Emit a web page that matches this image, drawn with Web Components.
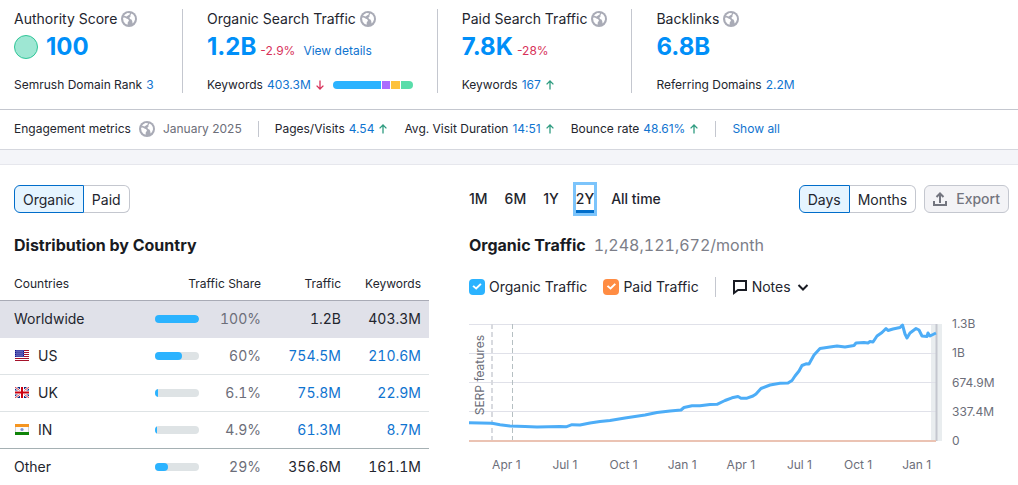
<!DOCTYPE html>
<html lang="en">
<head>
<meta charset="utf-8">
<meta name="viewport" content="width=device-width, initial-scale=1">
<title>Domain Overview</title>
<style>
  body { margin: 0; background: #fff; color: #23252e; font: 14px/20px Inter, "Liberation Sans", sans-serif; }
</style>
</head>
<body>
<domain-overview></domain-overview>
<script>
const shared = `
  *, *::before, *::after { box-sizing: border-box; }
  a { color: #0f74d0; text-decoration: none; }
  button { font: inherit; color: inherit; margin: 0; padding: 0; border: 0; background: none; cursor: pointer; }
`;
class Base extends HTMLElement {
  constructor() { super(); this.attachShadow({ mode: 'open' }); }
  connectedCallback() { this.shadowRoot.innerHTML = `<style>${shared}</style>${this.render()}`; }
}

customElements.define('globe-icon', class extends Base {
  render() {
    return `<style>:host { display: inline-flex; flex: none; width: 16px; height: 16px; color: #a9abb6; } svg { width: 100%; height: 100%; }</style>
    <svg viewBox="0 0 16 16" aria-hidden="true"><circle cx="8" cy="8" r="8" fill="currentColor"/>
    <path fill="#fff" d="M2.2 5.8 3.2 4.8 5.6 5.4 7 4.4 8.6 3.6 9 2.2 6.4 2 4 3.4z"/>
    <path fill="#fff" d="M2 6.8 3.8 6.4 5.4 7.4 7.2 8.2 8 9.8 6.8 11.2 6.6 13.8 4.4 12.8 2.6 10.6z"/>
    <path fill="#fff" d="M10.4 2.6 12.4 3.8 13.8 6 14 8.6 13 11 11.6 12.4 11.2 10 10.4 8.6 9 8 8.4 6.6 9.6 5.6 9.4 4.2z"/></svg>`;
  }
});

customElements.define('trend-arrow', class extends Base {
  render() {
    const down = this.getAttribute('dir') === 'down';
    return `<style>:host { display: inline-flex; flex: none; width: 10px; height: 10px; color: ${down ? '#d8325a' : '#2f9c80'}; } svg { width: 100%; height: 100%; }</style>
    <svg viewBox="0 0 10 10" fill="none" stroke="currentColor" stroke-width="1.3" aria-hidden="true"><path d="${down ? 'M5 .5v8.3M1.6 5.6 5 9 8.4 5.6' : 'M5 9.5V1.2M1.6 4.4 5 1 8.4 4.4'}"/></svg>`;
  }
});

customElements.define('metric-card', class extends Base {
  render() {
    return `<style>
      :host { display: flex; flex-direction: column; flex: none; height: 84px; padding-right: 24px; border-right: 1px solid #c4c7cf; }
      :host([last]) { border-right: 0; }
      .title, .foot { display: flex; align-items: center; gap: 4px; white-space: nowrap; }
      .value { display: flex; align-items: baseline; gap: 4px; height: 32px; margin: 2px 0 14px; line-height: 32px; white-space: nowrap; }
      .foot { height: 16px; font-size: 12px; line-height: 16px; }
      strong { font-size: 24px; font-weight: 700; color: #008ff8; }
      ::slotted(.delta) { font-size: 12px; color: #d8325a; }
      ::slotted(.more) { font-size: 12px; margin-left: 4px; }
      ::slotted(.dot) { flex: none; align-self: center; width: 24px; height: 24px; margin-right: 4px; border: 1px solid #30c698; border-radius: 50%; background: #9ee7d3; }
    </style>
    <div class="title"><span>${this.getAttribute('label')}</span><globe-icon></globe-icon></div>
    <div class="value"><slot name="lead"></slot><strong>${this.getAttribute('value')}</strong><slot name="extra"></slot></div>
    <div class="foot"><slot></slot></div>`;
  }
});

customElements.define('position-bar', class extends Base {
  render() {
    return `<style>
      :host { display: flex; gap: 1px; width: 80px; height: 8px; margin-left: 4px; border-radius: 4px; overflow: hidden; }
      i { flex: 8 0 0; background: #ab6cfe; } i:nth-of-type(1) { flex-grow: 48; background: #2bb3ff; }
      i:nth-of-type(3) { flex-grow: 9; background: #fdc23c; } i:nth-of-type(4) { flex-grow: 12; background: #59ddaa; }
    </style><i></i><i></i><i></i><i></i>`;
  }
});

customElements.define('summary-strip', class extends Base {
  render() {
    return `<style>
      :host { display: flex; gap: 24px; padding: 9px 14px 16px; border-bottom: 1px solid #c4c7cf; overflow: hidden; }
      .first { width: 169px; }
    </style>
    <metric-card class="first" label="Authority Score" value="100"><span class="dot" slot="lead"></span>Semrush Domain Rank <a href="#rank">3</a></metric-card>
    <metric-card label="Organic Search Traffic" value="1.2B"><span slot="extra" class="delta">-2.9%</span><a slot="extra" class="more" href="#details">View details</a>Keywords <a href="#organic">403.3M</a><trend-arrow dir="down"></trend-arrow><position-bar></position-bar></metric-card>
    <metric-card label="Paid Search Traffic" value="7.8K"><span slot="extra" class="delta">-28%</span>Keywords <a href="#paid">167</a><trend-arrow></trend-arrow></metric-card>
    <metric-card last label="Backlinks" value="6.8B">Referring Domains <a href="#domains">2.2M</a></metric-card>`;
  }
});

customElements.define('engagement-bar', class extends Base {
  render() {
    return `<style>
      :host { display: flex; box-sizing: border-box; align-items: center; gap: 16px; height: 40px; padding: 0 14px 1px; font-size: 12px; line-height: 16px; white-space: nowrap; border-bottom: 1px solid #d5d7de; overflow: hidden; }
      span { display: flex; align-items: center; gap: 4px; }
      .date { gap: 8px; color: #6c6e79; }
      .name { gap: 8px; }
      .rule { width: 1px; height: 16px; background: #c4c7cf; }
    </style>
    <span class="name">Engagement metrics <span class="date"><globe-icon></globe-icon>January 2025</span></span>
    <i class="rule"></i>
    <span>Pages/Visits <a href="#pages">4.54</a><trend-arrow></trend-arrow></span>
    <span>Avg. Visit Duration <a href="#duration">14:51</a><trend-arrow></trend-arrow></span>
    <span>Bounce rate <a href="#bounce">48.61%</a><trend-arrow></trend-arrow></span>
    <i class="rule"></i>
    <a href="#all">Show all</a>`;
  }
});

customElements.define('pill-toggle', class extends Base {
  render() {
    const items = this.getAttribute('options').split(',');
    return `<style>
      :host { display: inline-flex; height: 28px; }
      button { height: 28px; padding: 2px 8px 0; border: 1px solid #c4c7cf; border-left: 0; border-radius: 0 6px 6px 0; }
      button:first-of-type { border: 1px solid #006dca; border-radius: 6px 0 0 6px; background: #e5f4ff; }
    </style>${items.map((t, i) => `<button type="button" aria-pressed="${i === 0}">${t}</button>`).join('')}`;
  }
});

customElements.define('share-bar', class extends Base {
  render() {
    return `<style>
      :host { display: block; width: 44px; height: 8px; border-radius: 4px; background: #dee3e5; overflow: hidden; }
      i { display: block; width: ${this.getAttribute('value')}%; height: 8px; border-radius: 0 4px 4px 0; background: #2bb3ff; }
      :host([small]) i { border-radius: 0; }
    </style><i></i>`;
  }
});

customElements.define('country-flag', class extends Base {
  render() {
    const art = {
      us: `<rect width="14" height="11" fill="#fff"/><path d="M0 .5h14M0 2.5h14M0 4.5h14M0 6.5h14M0 8.5h14M0 10.5h14" stroke="#a5122a"/><rect width="9" height="7" fill="#10108a"/><path d="M.5 1.5h8M.5 3.5h8M.5 5.5h8" stroke="#a9acdf" stroke-dasharray="1 1"/><path d="M1.5 .5h7M1.5 2.5h7M1.5 4.5h7M1.5 6.5h7" stroke="#8085cc" stroke-dasharray="1 1"/>`,
      uk: `<rect width="14" height="11" fill="#0a2a82"/><path d="M0 0 14 11M14 0 0 11" stroke="#fff" stroke-width="2.4"/><path d="M0 0 14 11M14 0 0 11" stroke="#d8202c" stroke-width=".9"/><path d="M7 0v11M0 5.5h14" stroke="#fff" stroke-width="4"/><path d="M7 0v11M0 5.5h14" stroke="#cc0010" stroke-width="2"/>`,
      in: `<rect width="14" height="11" fill="#d0d0d4"/><rect x="1" y="3" width="12" height="5" fill="#fafafc"/><rect width="14" height="3" fill="#f59520"/><rect y="8" width="14" height="3" fill="#0f8408"/><circle cx="7" cy="5.5" r="1.6" fill="#7f92cc"/>`
    };
    return `<style>:host { display: block; width: 14px; height: 12px; } svg { display: block; width: 14px; height: 11px; }</style><svg viewBox="0 0 14 11" aria-hidden="true">${art[this.getAttribute('code')]}</svg>`;
  }
});

customElements.define('country-table', class extends Base {
  render() {
    const rows = [['Worldwide', '', 100, '100%', '1.2B', '403.3M'], ['US', 'us', 61, '60%', '754.5M', '210.6M'], ['UK', 'uk', 7, '6.1%', '75.8M', '22.9M'], ['IN', 'in', 5, '4.9%', '61.3M', '8.7M'], ['Other', '', 29, '29%', '356.6M', '161.1M']];
    return `<style>
      :host { display: block; }
      table { width: 100%; border-collapse: separate; border-spacing: 0; table-layout: fixed; }
      th, td { padding: 0; text-align: right; font-weight: 400; white-space: nowrap; }
      thead th { height: 33px; font-size: 12px; line-height: 16px; border-bottom: 1px solid #a9abb6; }
      tbody th, thead th:first-child { padding-left: 14px; text-align: left; }
      tbody th, tbody td { height: 37px; border-bottom: 1px solid #dee3e5; }
      tbody td { font-variant-numeric: tabular-nums; }
      tr > :last-child { padding-right: 8px; }
      .place { display: flex; align-items: center; gap: 9px; }
      country-flag { margin-left: 1px; }
      .share { display: flex; align-items: center; justify-content: space-between; color: #6c6e79; }
      tbody tr:first-child > * { background: #e0e1e9; border-bottom-color: #e0e1e9; }
      tbody tr:nth-child(4) > * { border-bottom-color: #a5b0b3; }
      tbody tr:last-child > * { border-bottom-color: transparent; }
    </style>
    <table>
      <colgroup><col><col style="width:106px"><col style="width:80px"><col style="width:88px"></colgroup>
      <thead><tr><th scope="col">Countries</th><th scope="col">Traffic Share</th><th scope="col">Traffic</th><th scope="col">Keywords</th></tr></thead>
      <tbody>${rows.map(([n, f, p, s, t, k]) => {
        const v = x => f ? `<a href="#${f}">${x}</a>` : x;
        return `<tr><th scope="row"><span class="place">${f ? `<country-flag code="${f}"></country-flag>` : ''}${n}</span></th><td><span class="share"><share-bar value="${p}"${p < 10 ? ' small' : ''}></share-bar>${s}</span></td><td>${v(t)}</td><td>${v(k)}</td></tr>`;
      }).join('')}</tbody>
    </table>`;
  }
});

customElements.define('country-panel', class extends Base {
  render() {
    return `<style>
      :host { display: block; min-width: 0; }
      pill-toggle { display: flex; margin-left: 14px; }
      h2 { margin: 20px 0 11px 14px; font-size: 16px; line-height: 24px; font-weight: 700; color: #191b23; }
    </style>
    <pill-toggle options="Organic,Paid"></pill-toggle>
    <h2>Distribution by Country</h2>
    <country-table></country-table>`;
  }
});

customElements.define('period-tabs', class extends Base {
  render() {
    return `<style>
      :host { display: flex; gap: 17px; }
      button { height: 28px; font-weight: 500; white-space: nowrap; }
      button[aria-selected="true"] { border-bottom: 3px solid #006dca; padding-top: 3px; outline: 3px solid #7cc4fb; }
    </style>
    <button type="button" role="tab">1M</button><button type="button" role="tab">6M</button><button type="button" role="tab">1Y</button><button type="button" role="tab" aria-selected="true">2Y</button><button type="button" role="tab">All time</button>`;
  }
});

customElements.define('series-check', class extends Base {
  render() {
    return `<style>
      :host { display: block; }
      label { display: flex; align-items: center; gap: 4px; white-space: nowrap; }
      input { appearance: none; flex: none; display: grid; place-items: center; width: 16px; height: 16px; margin: 0; border-radius: 4px; background: var(--tone); }
      input:checked::before { content: ""; width: 10px; height: 8px; background: #fff; clip-path: polygon(4% 50%, 18% 33%, 40% 58%, 82% 8%, 96% 24%, 42% 90%); }
    </style><label><input type="checkbox" checked><slot></slot></label>`;
  }
});

customElements.define('traffic-chart', class extends Base {
  render() {
    const pts = '0,98.7 23,99.2 31,100.7 41,102 56,102.5 68,103 91,102.5 97,102.8 103,100.7 111,101 121,99 131,97.5 141,96.5 156,94 176,91 188,88.5 201,87 212,86 215,83.5 223,81.8 231,81.8 241,80.5 248,80.3 256,76.5 263,73.8 269,72.5 272,74.3 278,74.2 284,72 287,70 292,64.5 301,61 311,59.3 319,59 323,56.5 326,52 330,47 333,41.5 337,39.8 340,40 345,31 351,24.5 361,23 368,22 376,23 385,21.5 387,19 395,18.5 399,19 401,17.5 404,18 408,12 413,8.5 417,4.5 419,6.5 424,5 431,3.5 433.5,1 436,10 438,14 441,9 447,4.5 450,6 453,12 458,12.5 459,9 461,12 464,10.5 467,9';
    return `<style>
      :host { display: grid; grid-template-columns: minmax(0, 1fr) 57px; column-gap: 15px; font-size: 12px; line-height: 16px; color: #6c6e79; }
      .plot { position: relative; margin: 8px 0; height: 117px; }
      svg { display: block; width: 100%; height: 100%; overflow: visible; }
      svg * { vector-effect: non-scaling-stroke; }
      .note { position: absolute; left: 3px; bottom: 26px; writing-mode: vertical-rl; transform: rotate(180deg); }
      .y { display: flex; flex-direction: column; justify-content: space-between; }
      .x { display: grid; grid-template-columns: repeat(8, 1fr); margin: 8px -9px 0 8px; text-align: center; white-space: nowrap; }
    </style>
    <div class="plot">
      <svg viewBox="0 0 468 117" preserveAspectRatio="none" role="img" aria-label="Organic traffic over two years">
        <rect x="462" width="11" height="117" fill="#e9edef"/>
        <path d="M0 .5h468M0 29.5h468M0 58.5h468M0 87.5h468" stroke="#e0e1e9"/>
        <path d="M467.5 0v117" stroke="#c4c7cf" stroke-width="2"/>
        <path d="M23 0v117" stroke="#d8dadf" stroke-width="2" stroke-dasharray="5 3"/>
        <path d="M43.5 0v117" stroke="#b5bfc2" stroke-dasharray="5 3"/>
        <path d="M0 117h467" stroke="#ebc3b3" stroke-width="2"/>
        <polyline points="${pts}" fill="none" stroke="#4dadf7" stroke-width="3" stroke-linejoin="round"/>
      </svg>
      <span class="note">SERP features</span>
    </div>
    <div class="y"><span>1.3B</span><span>1B</span><span>674.9M</span><span>337.4M</span><span>0</span></div>
    <div class="x">${['Apr', 'Jul', 'Oct', 'Jan', 'Apr', 'Jul', 'Oct', 'Jan'].map(m => `<span>${m} 1</span>`).join('')}</div>`;
  }
});

customElements.define('trend-panel', class extends Base {
  render() {
    return `<style>
      :host { display: block; min-width: 0; padding-right: 9px; }
      .tools, .legend { display: flex; align-items: center; }
      .tools pill-toggle { margin-left: auto; }
      .export { display: flex; align-items: center; gap: 9px; height: 28px; margin-left: 8px; padding: 0 8px; border: 1px solid #c4c7cf; border-radius: 6px; background: #f3f3f6; color: #73757f; font-weight: 500; }
      h2 { display: flex; gap: 8px; margin: 20px 0 17px; font-size: 16px; line-height: 24px; font-weight: 700; color: #191b23; }
      h2 span { font-weight: 400; color: #7c7e88; font-variant-numeric: tabular-nums; }
      .legend { gap: 16px; height: 25px; margin-bottom: 17px; }
      .rule { width: 1px; height: 20px; background: #c4c7cf; }
      .notes { display: flex; align-items: center; gap: 4px; }
    </style>
    <div class="tools">
      <period-tabs role="tablist"></period-tabs>
      <pill-toggle options="Days,Months"></pill-toggle>
      <button type="button" class="export"><svg width="14" height="14" viewBox="0 0 14 14" fill="none" stroke="currentColor" stroke-width="2" aria-hidden="true"><path d="M1 9v4h12V9M7 11V2M3.5 5 7 1.5 10.5 5"/></svg> Export</button>
    </div>
    <h2>Organic Traffic <span>1,248,121,672/month</span></h2>
    <div class="legend">
      <series-check style="--tone:#2bb3ff">Organic Traffic</series-check>
      <series-check style="--tone:#ff8c43">Paid Traffic</series-check>
      <i class="rule"></i>
      <button type="button" class="notes"><svg width="16" height="16" viewBox="0 0 16 16" fill="none" stroke="#191b23" stroke-width="2" aria-hidden="true"><path d="M2 2h12v9H6l-4 3z"/></svg>Notes<svg width="16" height="16" viewBox="0 0 16 16" fill="none" stroke="#191b23" stroke-width="2" aria-hidden="true"><path d="M3.5 6 8 10.5 12.5 6"/></svg></button>
    </div>
    <traffic-chart></traffic-chart>`;
  }
});

customElements.define('domain-overview', class extends Base {
  render() {
    return `<style>
      :host { display: block; }
      .gap { height: 14px; background: #f4f5f9; }
      main { display: grid; grid-template-columns: minmax(0, 429fr) minmax(0, 549fr); column-gap: 40px; padding-top: 20px; border-top: 1px solid #e6e7ed; }
    </style>
    <summary-strip></summary-strip>
    <engagement-bar></engagement-bar>
    <div class="gap"></div>
    <main><country-panel></country-panel><trend-panel></trend-panel></main>`;
  }
});
</script>
</body>
</html>
